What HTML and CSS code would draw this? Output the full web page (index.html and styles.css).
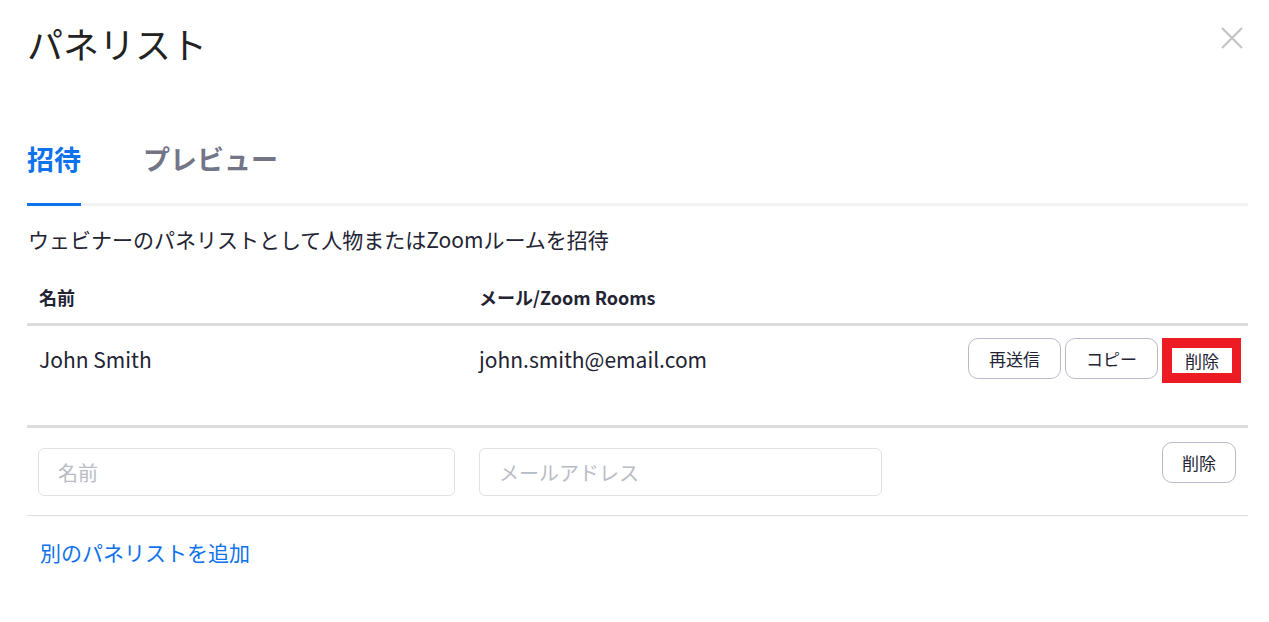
FILE: index.html
```html
<!DOCTYPE html>
<html lang="ja">
<head>
    <meta charset="UTF-8">
    <meta name="viewport" content="width=device-width, initial-scale=1.0">
    <title>パネリスト</title>
    <link rel="stylesheet" href="styles.css">
</head>
<body>
    <div class="dialog">
        <div class="dialog-header">
            <h1 class="title">パネリスト</h1>
            <button class="close" aria-label="閉じる">
                <svg width="22" height="22" viewBox="0 0 22 22">
                    <path d="M1 1 L21 21 M21 1 L1 21" stroke="#c4c4c4" stroke-width="2.2" fill="none"/>
                </svg>
            </button>
        </div>

        <div class="tabs">
            <div class="tab active">招待</div>
            <div class="tab">プレビュー</div>
        </div>

        <p class="desc">ウェビナーのパネリストとして人物またはZoomルームを招待</p>

        <div class="grid head">
            <div class="cell">名前</div>
            <div class="cell">メール/Zoom Rooms</div>
            <div class="cell"></div>
        </div>

        <div class="grid row">
            <div class="cell">John Smith</div>
            <div class="cell">john.smith@email.com</div>
            <div class="cell actions">
                <button class="btn">再送信</button>
                <button class="btn">コピー</button>
                <button class="btn marked">削除</button>
            </div>
        </div>

        <div class="grid row-new">
            <div class="cell"><input type="text" class="field" placeholder="名前"></div>
            <div class="cell"><input type="text" class="field" placeholder="メールアドレス"></div>
            <div class="cell actions top">
                <button class="btn">削除</button>
            </div>
        </div>

        <a class="add-link" href="#">別のパネリストを追加</a>
    </div>
</body>
</html>
```

FILE: styles.css
```css
body, html {
    margin: 0;
    background-color: #fff;
    font-family: "Noto Sans CJK JP", "Noto Sans", sans-serif;
    color: #232333;
}
.dialog {
    padding: 18px 21px 0 27px;
}
.dialog-header {
    display: flex;
    justify-content: space-between;
    align-items: flex-start;
}
.title {
    margin: 0;
    font-size: 36px;
    line-height: 50px;
    font-weight: 400;
    color: #222;
}
.close {
    background: none;
    border: none;
    padding: 0;
    margin: 9px 5px 0 0;
    cursor: pointer;
}
.tabs {
    display: flex;
    gap: 62px;
    margin-top: 71px;
    border-bottom: 3px solid #f2f2f4;
}
.tab {
    font-size: 27px;
    line-height: 40px;
    font-weight: 700;
    color: #747487;
    padding-bottom: 24px;
    margin-bottom: -3px;
    border-bottom: 3px solid transparent;
}
.tab.active {
    color: #0e72ed;
    border-bottom-color: #0e72ed;
}
.desc {
    margin: 19px 0 0 1px;
    font-size: 21px;
    line-height: 28px;
}
.grid {
    display: grid;
    grid-template-columns: 440px 427px 1fr;
}
.cell {
    padding: 0 12px;
}
.head {
    margin-top: 32px;
    padding-bottom: 13px;
    border-bottom: 3px solid #dcdcdc;
    font-size: 18px;
    line-height: 25px;
    font-weight: 700;
}
.row {
    align-items: center;
    padding: 12px 0 42px;
    border-bottom: 3px solid #dcdcdc;
    font-size: 21px;
    line-height: 28px;
}
.row .cell {
    margin-top: -3px;
}
.row .actions {
    margin-top: 0;
}
.row .btn {
    padding: 0 20px;
}
.row-new {
    padding: 20px 0 19px;
    border-bottom: 1px solid #dcdcdc;
}
.row-new .cell:first-child {
    padding-left: 11px;
}
.actions {
    display: flex;
    justify-content: flex-end;
    align-items: flex-start;
    gap: 4px;
    padding-right: 7px;
}
.actions.top {
    padding-right: 12px;
    margin-top: -6px;
}
.btn {
    height: 41px;
    padding: 0 19px;
    font-family: inherit;
    font-size: 17px;
    color: #232333;
    background: #fff;
    border: 1px solid #babacc;
    border-radius: 10px;
    cursor: pointer;
}
.row .btn.marked {
    height: 45px;
    padding: 0 13px;
    border: 10px solid #ed1c24;
    border-right-width: 9px;
    border-radius: 0;
}
.field {
    display: block;
    width: 100%;
    height: 48px;
    box-sizing: border-box;
    padding: 0 19px;
    font-family: inherit;
    font-size: 20px;
    color: #232333;
    border: 1px solid #dfe3e8;
    border-radius: 6px;
    outline: none;
}
.field::placeholder {
    color: #babcc4;
}
.add-link {
    display: inline-block;
    margin: 22px 0 0 13px;
    font-size: 21px;
    line-height: 28px;
    color: #0e72ed;
    text-decoration: none;
}
```
